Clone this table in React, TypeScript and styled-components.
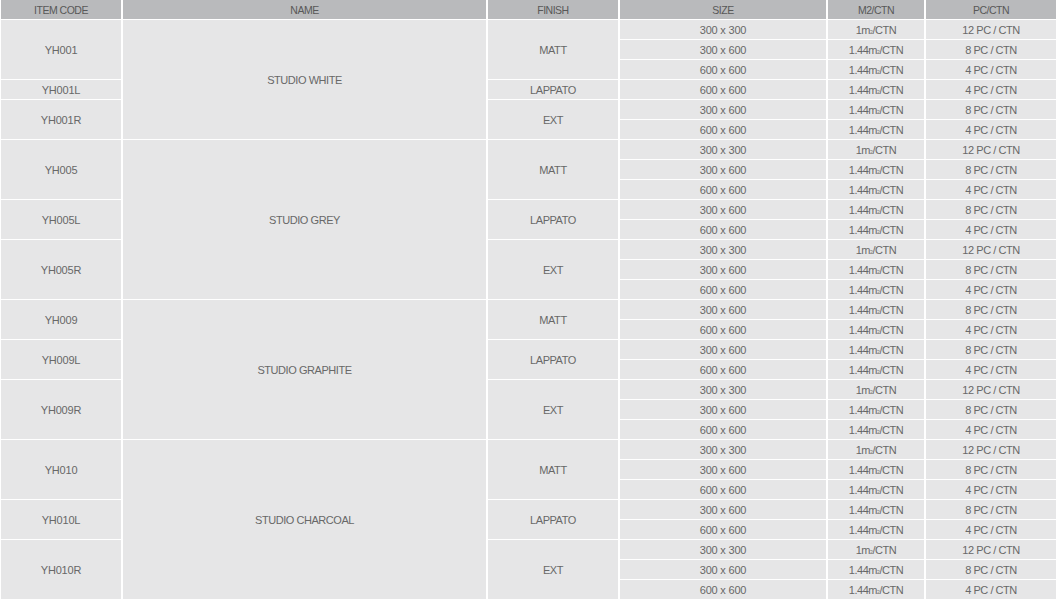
import React from "react";
import styled, { createGlobalStyle } from "styled-components";

const GlobalStyle = createGlobalStyle`
  html, body {
    margin: 0;
    padding: 0;
    background: #ffffff;
  }
`;

const Table = styled.table`
  width: 1059px;
  table-layout: fixed;
  border-collapse: separate;
  border-spacing: 2px 1px;
  margin: -1px 0 0 -1px;
  font-family: "Liberation Sans", Arial, sans-serif;
  font-size: 11px;
  color: #686868;
`;

const HeadCell = styled.th<{ $w: number }>`
  width: ${(p) => p.$w}px;
  height: 19px;
  padding: 0;
  background: #b9babc;
  color: #585858;
  font-weight: normal;
  font-size: 10.5px;
  letter-spacing: -0.5px;
  text-align: center;
  vertical-align: middle;
`;

const Cell = styled.td<{ $tight?: boolean }>`
  height: 19px;
  padding: 0;
  background: #e6e6e7;
  text-align: center;
  vertical-align: middle;
  white-space: nowrap;
  letter-spacing: ${(p) => (p.$tight ? "-0.45px" : "-0.2px")};
`;

const Sq = styled.span`
  font-size: 5px;
  vertical-align: baseline;
`;

type Variant = { code: string; finish: string; sizes: string[] };
type Series = { name: string; variants: Variant[] };

const series: Series[] = [
  {
    name: "STUDIO WHITE",
    variants: [
      { code: "YH001", finish: "MATT", sizes: ["300 x 300", "300 x 600", "600 x 600"] },
      { code: "YH001L", finish: "LAPPATO", sizes: ["600 x 600"] },
      { code: "YH001R", finish: "EXT", sizes: ["300 x 600", "600 x 600"] },
    ],
  },
  {
    name: "STUDIO GREY",
    variants: [
      { code: "YH005", finish: "MATT", sizes: ["300 x 300", "300 x 600", "600 x 600"] },
      { code: "YH005L", finish: "LAPPATO", sizes: ["300 x 600", "600 x 600"] },
      { code: "YH005R", finish: "EXT", sizes: ["300 x 300", "300 x 600", "600 x 600"] },
    ],
  },
  {
    name: "STUDIO GRAPHITE",
    variants: [
      { code: "YH009", finish: "MATT", sizes: ["300 x 600", "600 x 600"] },
      { code: "YH009L", finish: "LAPPATO", sizes: ["300 x 600", "600 x 600"] },
      { code: "YH009R", finish: "EXT", sizes: ["300 x 300", "300 x 600", "600 x 600"] },
    ],
  },
  {
    name: "STUDIO CHARCOAL",
    variants: [
      { code: "YH010", finish: "MATT", sizes: ["300 x 300", "300 x 600", "600 x 600"] },
      { code: "YH010L", finish: "LAPPATO", sizes: ["300 x 600", "600 x 600"] },
      { code: "YH010R", finish: "EXT", sizes: ["300 x 300", "300 x 600", "600 x 600"] },
    ],
  },
];

const pcs: Record<string, string> = {
  "300 x 300": "12 PC / CTN",
  "300 x 600": "8 PC / CTN",
  "600 x 600": "4 PC / CTN",
};

const Area = ({ size }: { size: string }) => (
  <>
    {size === "300 x 300" ? "1m" : "1.44m"}
    <Sq>2</Sq>/CTN
  </>
);

const columns: [string, number][] = [
  ["ITEM CODE", 120],
  ["NAME", 363],
  ["FINISH", 130],
  ["SIZE", 206],
  ["M2/CTN", 96],
  ["PC/CTN", 130],
];

export default function App() {
  const rows: React.ReactNode[] = [];

  series.forEach((s) => {
    const total = s.variants.reduce((n, v) => n + v.sizes.length, 0);
    s.variants.forEach((v, vi) => {
      v.sizes.forEach((size, si) => {
        rows.push(
          <tr key={`${v.code}-${si}`}>
            {si === 0 && <Cell rowSpan={v.sizes.length}>{v.code}</Cell>}
            {vi === 0 && si === 0 && (
              <Cell rowSpan={total} $tight>
                {s.name}
              </Cell>
            )}
            {si === 0 && (
              <Cell rowSpan={v.sizes.length} $tight>
                {v.finish}
              </Cell>
            )}
            <Cell>{size}</Cell>
            <Cell $tight>
              <Area size={size} />
            </Cell>
            <Cell $tight>{pcs[size]}</Cell>
          </tr>
        );
      });
    });
  });

  return (
    <>
      <GlobalStyle />
      <Table>
        <thead>
          <tr>
            {columns.map(([label, w]) => (
              <HeadCell key={label} $w={w}>
                {label}
              </HeadCell>
            ))}
          </tr>
        </thead>
        <tbody>{rows}</tbody>
      </Table>
    </>
  );
}
